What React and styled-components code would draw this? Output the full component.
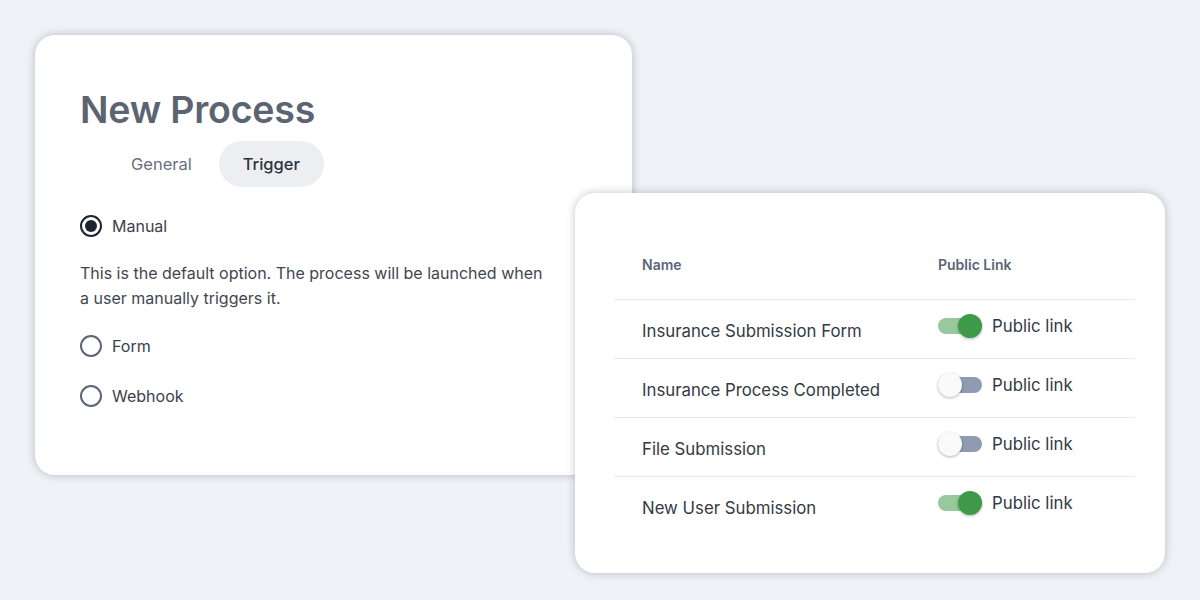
import React, { useState } from 'react';
import styled, { createGlobalStyle } from 'styled-components';

const GlobalStyle = createGlobalStyle`
  html, body { margin: 0; padding: 0; }
  body { background: #eff2f7; font-family: Inter, "Noto Sans", sans-serif; }
`;

const Desk = styled.div`
  position: relative; width: 1200px; height: 600px; overflow: hidden;
  background: #eff2f7;
`;

const Card = styled.div`
  position: absolute; background: #fff; border-radius: 20px;
  box-shadow: 0 0 8px rgba(60, 70, 90, 0.32);
  box-sizing: border-box;
`;

const ProcessCard = styled(Card)`
  left: 35px; top: 35px; width: 597px; height: 440px;
  padding: 53px 45px 0 45px;
  display: flex; flex-direction: column;
`;

const Title = styled.h1`
  margin: 0; font-size: 37.5px; line-height: 44px; font-weight: 600;
  color: #5d6471; letter-spacing: -0.2px;
`;

const Tabs = styled.div`
  display: flex; gap: 3px; margin: 9px 0 0 27px;
`;

const Tab = styled.button`
  border: none; font-family: inherit; font-size: 16.5px; height: 46px;
  padding: 0 24px; border-radius: 23px; cursor: pointer;
  background: ${({ $active }) => ($active ? '#eceef1' : 'transparent')};
  color: ${({ $active }) => ($active ? '#2d333e' : '#687080')};
  font-weight: ${({ $active }) => ($active ? 500 : 400)};
`;

const Options = styled.div`
  display: flex; flex-direction: column; margin-top: 27px;
`;

const Option = styled.label`
  display: flex; align-items: center; gap: 10px; height: 24px;
  font-size: 16px; color: #3a414d; cursor: pointer;
  margin-bottom: ${({ $gap }) => $gap}px;
`;

const Radio = styled.span`
  width: 22px; height: 22px; border-radius: 50%; box-sizing: border-box;
  border: 2px solid ${({ $checked }) => ($checked ? '#1d2430' : '#5b6578')};
  display: flex; align-items: center; justify-content: center;
  &::after {
    content: ''; width: 12px; height: 12px; border-radius: 50%;
    background: ${({ $checked }) => ($checked ? '#1d2430' : 'transparent')};
  }
`;

const Description = styled.p`
  margin: 0 0 23px 0; font-size: 16px; line-height: 25px; color: #3f4652;
  max-width: 472px;
`;

const LinksCard = styled(Card)`
  left: 575px; top: 193px; width: 590px; height: 380px;
  padding: 53px 30px 0 39px;
`;

const Table = styled.div`
  display: flex; flex-direction: column;
`;

const Row = styled.div`
  display: grid; grid-template-columns: 296px 1fr;
  height: ${({ $head }) => ($head ? '53px' : '58px')};
  border-bottom: ${({ $last }) => ($last ? 'none' : '1px solid #e6e9ef')};
  padding-left: 28px;
  align-items: ${({ $head }) => ($head ? 'start' : 'center')};
`;

const HeadCell = styled.div`
  font-size: 14px; font-weight: 600; color: #5a6577; line-height: 38px;
`;

const NameCell = styled.div`
  font-size: 16.8px; color: #333a45; padding-top: 4px;
`;

const LinkCell = styled.div`
  display: flex; align-items: center; gap: 10px; margin-bottom: 6px;
  font-size: 16.8px; color: #333a45;
`;

const Track = styled.button`
  position: relative; width: 44px; height: 16px; border-radius: 8px;
  border: none; padding: 0; cursor: pointer;
  background: ${({ $on }) => ($on ? '#98c99c' : '#8f9bb2')};
`;

const Knob = styled.span`
  position: absolute; top: -4px; left: ${({ $on }) => ($on ? '20px' : '0')};
  width: 24px; height: 24px; border-radius: 50%;
  background: ${({ $on }) => ($on ? '#3e9a49' : '#fafafa')};
  box-shadow: 0 1px 3px rgba(0, 0, 0, 0.3);
`;

const initialRows = [
  { name: 'Insurance Submission Form', on: true },
  { name: 'Insurance Process Completed', on: false },
  { name: 'File Submission', on: false },
  { name: 'New User Submission', on: true },
];

const triggers = [
  { id: 'manual', label: 'Manual' },
  { id: 'form', label: 'Form' },
  { id: 'webhook', label: 'Webhook' },
];

export default function App() {
  const [tab, setTab] = useState('trigger');
  const [trigger, setTrigger] = useState('manual');
  const [rows, setRows] = useState(initialRows);

  const toggle = (i) =>
    setRows((r) => r.map((row, j) => (j === i ? { ...row, on: !row.on } : row)));

  return (
    <Desk>
      <GlobalStyle />
      <ProcessCard>
        <Title>New Process</Title>
        <Tabs>
          <Tab $active={tab === 'general'} onClick={() => setTab('general')}>General</Tab>
          <Tab $active={tab === 'trigger'} onClick={() => setTab('trigger')}>Trigger</Tab>
        </Tabs>
        <Options>
          {triggers.map((t) => (
            <React.Fragment key={t.id}>
              <Option
                $gap={t.id === 'manual' ? 23 : 26}
                onClick={() => setTrigger(t.id)}
              >
                <Radio $checked={trigger === t.id} />
                {t.label}
              </Option>
              {t.id === 'manual' && (
                <Description>
                  This is the default option. The process will be launched when a user manually triggers it.
                </Description>
              )}
            </React.Fragment>
          ))}
        </Options>
      </ProcessCard>

      <LinksCard>
        <Table>
          <Row $head>
            <HeadCell>Name</HeadCell>
            <HeadCell>Public Link</HeadCell>
          </Row>
          {rows.map((row, i) => (
            <Row key={row.name} $last={i === rows.length - 1}>
              <NameCell>{row.name}</NameCell>
              <LinkCell>
                <Track $on={row.on} onClick={() => toggle(i)}>
                  <Knob $on={row.on} />
                </Track>
                Public link
              </LinkCell>
            </Row>
          ))}
        </Table>
      </LinksCard>
    </Desk>
  );
}
